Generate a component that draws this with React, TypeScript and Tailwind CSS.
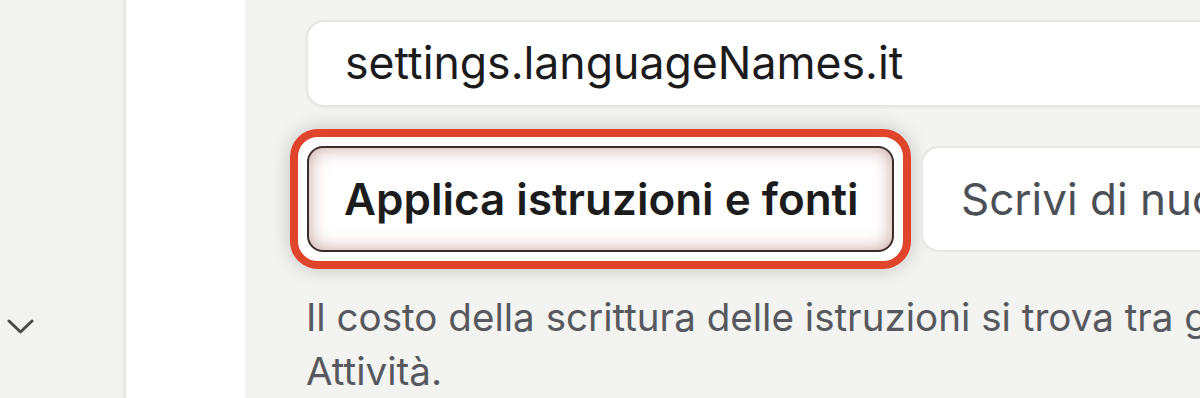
import React from "react";

export default function App() {
  return (
    <div
      className="flex h-[398px] w-[1200px] overflow-hidden bg-[#f3f3f1]"
      style={{ fontFamily: "Inter, 'Noto Sans', sans-serif" }}
    >
      <aside className="flex w-[126px] shrink-0 flex-col justify-end border-r-[3px] border-[#e7e7e4] bg-[#f2f2f0] pb-[63px] pl-[7px]">
        <svg width="27" height="17" viewBox="0 0 27 17" fill="none">
          <polyline
            points="2,3 13.5,14 25,3"
            stroke="#4a4a4a"
            strokeWidth="3"
            strokeLinecap="round"
            strokeLinejoin="round"
          />
        </svg>
      </aside>
      <div className="w-[119px] shrink-0 bg-white" />
      <main className="w-[1100px] shrink-0 pl-[61px] pt-[20px]">
        <div className="flex h-[87px] w-[1000px] items-center rounded-[18px] border-2 border-[#e6e6e4] bg-white pl-[37px] text-[44.6px] text-[#1b1b1b] shadow-[0_1px_3px_rgba(0,0,0,0.05)]">
          settings.languageNames.it
        </div>
        <div className="-ml-[16px] mt-[22px] flex items-center gap-[10px]">
          <div className="shrink-0 rounded-[28px] border-[8px] border-[#e0452b] bg-white p-[9px] shadow-[0_0_20px_rgba(0,0,0,0.2)]">
            <button className="flex h-[106px] w-[587px] items-center rounded-[16px] border-2 border-[#3b2b2b] bg-white pl-[35px] text-[44px] font-semibold text-[#1c1c1c] shadow-[inset_0_0_18px_rgba(150,85,75,0.55)]">
              Applica istruzioni e fonti
            </button>
          </div>
          <button className="flex h-[106px] w-[420px] shrink-0 items-center overflow-hidden whitespace-nowrap rounded-[18px] border-2 border-[#e6e6e4] bg-white pl-[38px] text-[44px] text-[#4b4f56]">
            Scrivi di nuovo
          </button>
        </div>
        <p className="mt-[21px] w-[1100px] text-[38.6px] leading-[54px] text-[#57595e]">
          <span className="whitespace-nowrap">
            Il costo della scrittura delle istruzioni si trova tra gli importi della scheda
          </span>
          <br />
          Attività.
        </p>
      </main>
    </div>
  );
}
